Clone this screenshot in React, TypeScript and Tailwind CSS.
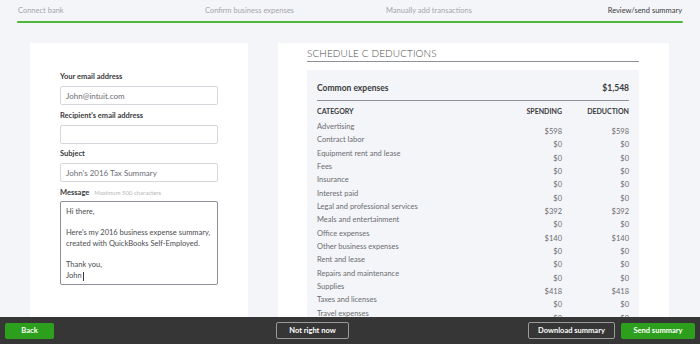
import React from "react";

const steps = ["Connect bank", "Confirm business expenses", "Manually add transactions"];

const rows: [string, string][] = [
  ["Advertising", "$598"],
  ["Contract labor", "$0"],
  ["Equipment rent and lease", "$0"],
  ["Fees", "$0"],
  ["Insurance", "$0"],
  ["Interest paid", "$0"],
  ["Legal and professional services", "$392"],
  ["Meals and entertainment", "$0"],
  ["Office expenses", "$140"],
  ["Other business expenses", "$0"],
  ["Rent and lease", "$0"],
  ["Repairs and maintenance", "$0"],
  ["Supplies", "$418"],
  ["Taxes and licenses", "$0"],
  ["Travel expenses", "$0"],
  ["Utilities", "$0"],
];

function Field({ label, value }: { label: string; value?: string }) {
  return (
    <div className="mb-[5.5px]">
      <div className="mb-[4px] text-[7.5px] font-bold leading-[10px] text-[#393a3d]">{label}</div>
      <div className="flex h-[19px] w-[158px] items-center rounded-[2px] border border-[#d4d7dc] bg-white px-[5px] text-[8px] text-[#6b6c72]">
        {value}
      </div>
    </div>
  );
}

export default function App() {
  return (
    <div
      className="flex h-[344px] w-[700px] flex-col overflow-hidden bg-[#f4f5f8]"
      style={{ fontFamily: "Lato, 'Open Sans', sans-serif" }}
    >
      {/* progress */}
      <div className="shrink-0 px-[17px] pt-[5px]">
        <div className="flex h-[11px] items-center text-[7.5px] text-[#a4a6ab]">
          {steps.map((s, i) => (
            <span key={s} className={i === 0 ? "w-[188px] pl-[1px]" : i === 1 ? "w-[181px]" : "w-[200px]"}>
              {s}
            </span>
          ))}
          <span className="ml-auto pr-[1px] text-[#393a3d]">Review/send summary</span>
        </div>
        <div className="mt-[5px] h-[2px] w-[666px] rounded-full bg-[#4cb83d]" />
      </div>

      {/* content */}
      <div className="flex min-h-0 flex-1 gap-[30px] overflow-hidden pl-[30px] pt-[20px]">
        <div className="w-[218px] shrink-0 bg-white pl-[30px] pt-[29px]">
          <Field label="Your email address" value="John@intuit.com" />
          <Field label="Recipient's email address" />
          <Field label="Subject" value="John's 2016 Tax Summary" />
          <div className="mb-[3px] flex items-baseline gap-[5px] leading-[10px]">
            <span className="text-[7.5px] font-bold text-[#393a3d]">Message</span>
            <span className="text-[6px] text-[#b5b7bb]">Maximum 500 characters</span>
          </div>
          <div className="h-[84px] w-[158px] rounded-[2px] border border-[#8d9096] px-[5px] pt-[5px] text-[7.5px] leading-[10.8px] text-[#4a4b50]">
            <div>Hi there,</div>
            <div>&nbsp;</div>
            <div>Here's my 2016 business expense summary,</div>
            <div>created with QuickBooks Self-Employed.</div>
            <div>&nbsp;</div>
            <div>Thank you,</div>
            <div className="flex items-center">
              John<span className="ml-[1px] inline-block h-[9px] w-px bg-[#393a3d]" />
            </div>
          </div>
        </div>

        <div className="w-[391px] shrink-0 bg-white pl-[29px] pt-[4px]">
          <div className="w-[332px] border-b border-[#8d9096] pb-[2px] text-[10px] font-light leading-[12px] tracking-[0.1px] text-[#4a4b50]">
            SCHEDULE C DEDUCTIONS
          </div>
          <div className="mt-[8px] w-[332px] bg-[#f4f5f8] px-[10px] pt-[13px]">
            <div className="flex items-center justify-between border-b border-[#8d9096] pb-[6px] text-[8.5px] font-bold leading-[11px] text-[#393a3d]">
              <span>Common expenses</span>
              <span>$1,548</span>
            </div>
            <div className="mt-[5px] flex text-[7px] font-bold leading-[10px] text-[#393a3d]">
              <span className="flex-1">CATEGORY</span>
              <span className="w-[60px] text-right">SPENDING</span>
              <span className="w-[67px] text-right">DEDUCTION</span>
            </div>
            <div className="mt-[6px]">
              {rows.map(([name, amt]) => (
                <div key={name} className="flex h-[13.35px] text-[7.5px] leading-[10px] text-[#6b6c72]">
                  <span className="flex-1">{name}</span>
                  <span className="mt-[5px] w-[60px] text-right">{amt}</span>
                  <span className="mt-[5px] w-[67px] text-right">{amt}</span>
                </div>
              ))}
            </div>
          </div>
        </div>
      </div>

      {/* footer */}
      <div className="flex h-[27px] shrink-0 items-center bg-[#363636] px-[5px]">
        <button className="h-[16px] w-[49px] rounded-[2px] bg-[#2ca01c] text-[7.5px] font-bold text-white">Back</button>
        <button className="ml-[222px] h-[17px] w-[73px] rounded-[2px] border border-[#9a9a9a] text-[7.5px] font-bold text-white">
          Not right now
        </button>
        <button className="ml-auto h-[17px] w-[87px] rounded-[2px] border border-[#9a9a9a] text-[7.5px] font-bold text-white">
          Download summary
        </button>
        <button className="ml-[6px] h-[16px] w-[74px] rounded-[2px] bg-[#2ca01c] text-[7.5px] font-bold text-white">
          Send summary
        </button>
      </div>
    </div>
  );
}
